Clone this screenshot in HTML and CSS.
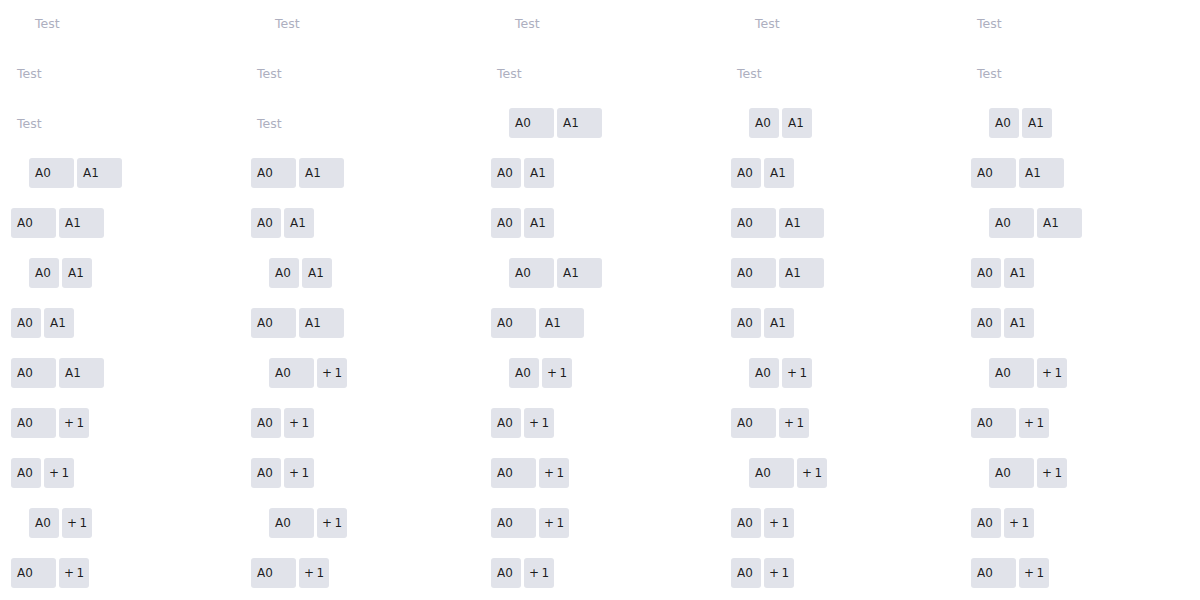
FILE: index.html
```html
<!DOCTYPE html>
<html>
<head>
<meta charset="utf-8">
<link rel="stylesheet" href="styles.css">
</head>
<body>
<div class="grid">
  <div class="col">
    <div class="row in"><span class="ph">Test</span></div>
    <div class="row"><span class="ph">Test</span></div>
    <div class="row"><span class="ph">Test</span></div>
    <div class="row in"><span class="tag w">A0</span><span class="tag w">A1</span></div>
    <div class="row"><span class="tag w">A0</span><span class="tag w">A1</span></div>
    <div class="row in"><span class="tag">A0</span><span class="tag">A1</span></div>
    <div class="row"><span class="tag">A0</span><span class="tag">A1</span></div>
    <div class="row"><span class="tag w">A0</span><span class="tag w">A1</span></div>
    <div class="row"><span class="tag w">A0</span><span class="tag more">+&#8201;1</span></div>
    <div class="row"><span class="tag">A0</span><span class="tag more">+&#8201;1</span></div>
    <div class="row in"><span class="tag">A0</span><span class="tag more">+&#8201;1</span></div>
    <div class="row"><span class="tag w">A0</span><span class="tag more">+&#8201;1</span></div>
  </div>
  <div class="col">
    <div class="row in"><span class="ph">Test</span></div>
    <div class="row"><span class="ph">Test</span></div>
    <div class="row"><span class="ph">Test</span></div>
    <div class="row"><span class="tag w">A0</span><span class="tag w">A1</span></div>
    <div class="row"><span class="tag">A0</span><span class="tag">A1</span></div>
    <div class="row in"><span class="tag">A0</span><span class="tag">A1</span></div>
    <div class="row"><span class="tag w">A0</span><span class="tag w">A1</span></div>
    <div class="row in"><span class="tag w">A0</span><span class="tag more">+&#8201;1</span></div>
    <div class="row"><span class="tag">A0</span><span class="tag more">+&#8201;1</span></div>
    <div class="row"><span class="tag">A0</span><span class="tag more">+&#8201;1</span></div>
    <div class="row in"><span class="tag w">A0</span><span class="tag more">+&#8201;1</span></div>
    <div class="row"><span class="tag w">A0</span><span class="tag more">+&#8201;1</span></div>
  </div>
  <div class="col">
    <div class="row in"><span class="ph">Test</span></div>
    <div class="row"><span class="ph">Test</span></div>
    <div class="row in"><span class="tag w">A0</span><span class="tag w">A1</span></div>
    <div class="row"><span class="tag">A0</span><span class="tag">A1</span></div>
    <div class="row"><span class="tag">A0</span><span class="tag">A1</span></div>
    <div class="row in"><span class="tag w">A0</span><span class="tag w">A1</span></div>
    <div class="row"><span class="tag w">A0</span><span class="tag w">A1</span></div>
    <div class="row in"><span class="tag">A0</span><span class="tag more">+&#8201;1</span></div>
    <div class="row"><span class="tag">A0</span><span class="tag more">+&#8201;1</span></div>
    <div class="row"><span class="tag w">A0</span><span class="tag more">+&#8201;1</span></div>
    <div class="row"><span class="tag w">A0</span><span class="tag more">+&#8201;1</span></div>
    <div class="row"><span class="tag">A0</span><span class="tag more">+&#8201;1</span></div>
  </div>
  <div class="col">
    <div class="row in"><span class="ph">Test</span></div>
    <div class="row"><span class="ph">Test</span></div>
    <div class="row in"><span class="tag">A0</span><span class="tag">A1</span></div>
    <div class="row"><span class="tag">A0</span><span class="tag">A1</span></div>
    <div class="row"><span class="tag w">A0</span><span class="tag w">A1</span></div>
    <div class="row"><span class="tag w">A0</span><span class="tag w">A1</span></div>
    <div class="row"><span class="tag">A0</span><span class="tag">A1</span></div>
    <div class="row in"><span class="tag">A0</span><span class="tag more">+&#8201;1</span></div>
    <div class="row"><span class="tag w">A0</span><span class="tag more">+&#8201;1</span></div>
    <div class="row in"><span class="tag w">A0</span><span class="tag more">+&#8201;1</span></div>
    <div class="row"><span class="tag">A0</span><span class="tag more">+&#8201;1</span></div>
    <div class="row"><span class="tag">A0</span><span class="tag more">+&#8201;1</span></div>
  </div>
  <div class="col">
    <div class="row"><span class="ph">Test</span></div>
    <div class="row"><span class="ph">Test</span></div>
    <div class="row in"><span class="tag">A0</span><span class="tag">A1</span></div>
    <div class="row"><span class="tag w">A0</span><span class="tag w">A1</span></div>
    <div class="row in"><span class="tag w">A0</span><span class="tag w">A1</span></div>
    <div class="row"><span class="tag">A0</span><span class="tag">A1</span></div>
    <div class="row"><span class="tag">A0</span><span class="tag">A1</span></div>
    <div class="row in"><span class="tag w">A0</span><span class="tag more">+&#8201;1</span></div>
    <div class="row"><span class="tag w">A0</span><span class="tag more">+&#8201;1</span></div>
    <div class="row in"><span class="tag w">A0</span><span class="tag more">+&#8201;1</span></div>
    <div class="row"><span class="tag">A0</span><span class="tag more">+&#8201;1</span></div>
    <div class="row"><span class="tag w">A0</span><span class="tag more">+&#8201;1</span></div>
  </div>
</div>
</body>
</html>
```

FILE: styles.css
```css
html, body {
  margin: 0;
  padding: 0;
  background: #ffffff;
}
body {
  font-family: "DejaVu Sans", "Liberation Sans", sans-serif;
  font-size: 12px;
  color: rgba(0, 0, 0, 0.88);
}
.grid {
  display: grid;
  grid-template-columns: repeat(5, 240px);
}
.col {
  display: flex;
  flex-direction: column;
}
.row {
  height: 50px;
  box-sizing: border-box;
  padding-top: 8px;
  padding-left: 11px;
  display: flex;
  align-items: flex-start;
  gap: 3.3px;
}
.row.in {
  padding-left: 29px;
}
.ph {
  display: block;
  box-sizing: border-box;
  height: 30px;
  line-height: 30px;
  padding-top: 1px;
  padding-left: 6px;
  color: #adafbf;
  font-size: 12.5px;
}
.tag {
  display: block;
  box-sizing: border-box;
  width: 29.7px;
  height: 29.7px;
  line-height: 29.7px;
  padding-top: 1px;
  padding-left: 6px;
  border-radius: 3px;
  background: #e1e3ea;
  white-space: nowrap;
  overflow: hidden;
}
.tag.w {
  width: 44.7px;
}
.tag.more {
  padding-left: 5px;
}
```
